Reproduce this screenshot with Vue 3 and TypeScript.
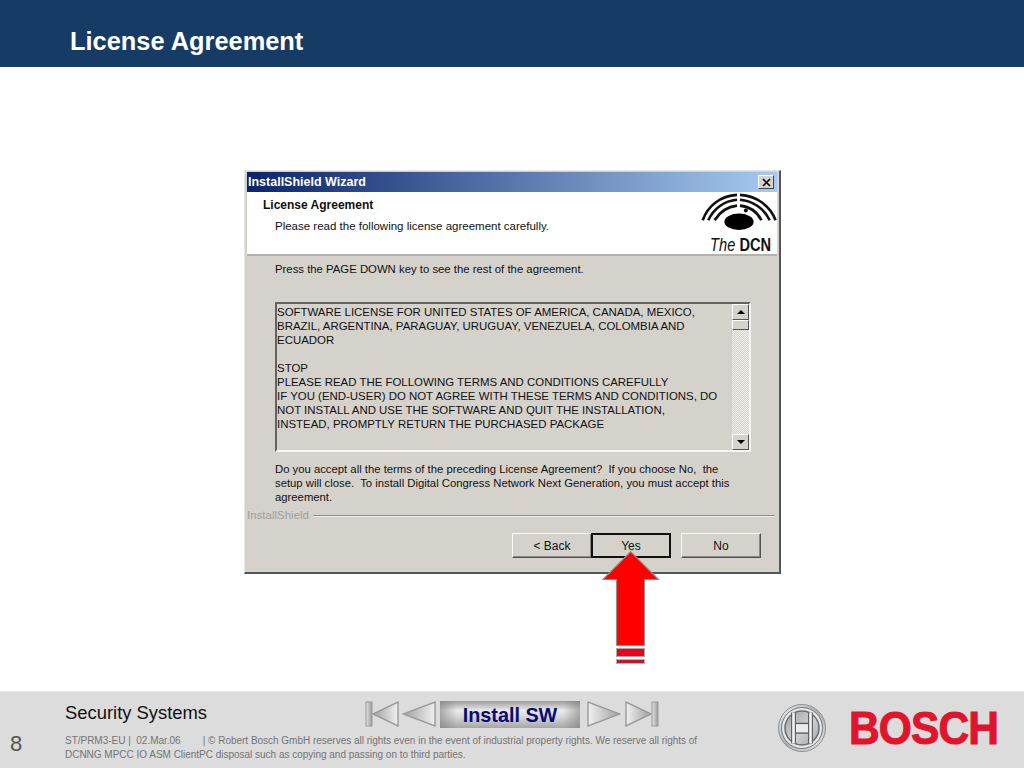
<template>
  <div class="slide">
    <header class="slide-header">
      <h1 class="slide-title">License Agreement</h1>
    </header>

    <main class="slide-body">
      <section class="wizard">
        <div class="titlebar">
          <span class="titlebar-text">InstallShield Wizard</span>
          <span class="close-btn">
            <svg width="13" height="11" viewBox="0 0 13 11">
              <path d="M3 2l7 7M10 2l-7 7" stroke="#000" stroke-width="1.6" fill="none" />
            </svg>
          </span>
        </div>

        <div class="banner">
          <div class="banner-text">
            <div class="banner-title">License Agreement</div>
            <div class="banner-sub">Please read the following license agreement carefully.</div>
          </div>
          <div class="dcn-logo">
            <svg width="76" height="40" viewBox="0 0 76 40">
              <g fill="none" stroke="#111" stroke-width="2.7">
                <path d="M.8 29C6 14 19 4 36 3" />
                <path d="M39 3C56 4 70 14 75.5 29" />
                <path d="M6.5 29C12 17 23 9 36 8" />
                <path d="M39 8C52 9 64 17 69.5 29" />
                <path d="M13 29C18 21 26 15 36 14" />
                <path d="M39 14C49 15 57 21 61 29" />
              </g>
              <ellipse cx="38" cy="30.5" rx="15" ry="8.5" fill="#000" />
              <circle cx="45" cy="19" r="2" fill="#000" />
            </svg>
            <div class="dcn-name"><span class="dcn-the">The</span> <b>DCN</b></div>
          </div>
        </div>

        <div class="wizard-content">
          <p class="press-line">Press the PAGE DOWN key to see the rest of the agreement.</p>

          <div class="license-box">
            <div class="license-text">{{ licenseText }}</div>
            <div class="scrollbar">
              <span class="scroll-btn"><i class="tri-up"></i></span>
              <span class="scroll-thumb"></span>
              <span class="scroll-track"></span>
              <span class="scroll-btn"><i class="tri-down"></i></span>
            </div>
          </div>

          <p class="question">{{ questionText }}</p>
        </div>

        <div class="brand-line">
          <span class="brand-name">InstallShield</span>
          <span class="brand-rule"></span>
        </div>

        <div class="buttons">
          <span class="btn">&lt; Back</span>
          <span class="btn btn-default">Yes</span>
          <span class="btn btn-no">No</span>
        </div>
      </section>

      <svg class="arrow" width="58" height="114" viewBox="0 0 58 114">
        <path
          d="M28.7.6 56.5 28.5H42.5V94.5H14.5V28.5H.8Z"
          fill="#fe0000"
          stroke="#8f8f8f"
          stroke-width="1.2"
        />
        <rect x="14.5" y="97.5" width="28" height="8" fill="#f0001c" stroke="#a8a8a8" />
        <rect x="14.5" y="108.5" width="28" height="4" fill="#bb1a2c" stroke="#b0b0b0" />
      </svg>
    </main>

    <footer class="slide-footer">
      <div class="page-num">8</div>

      <div class="footer-main">
        <div class="footer-top">
          <div class="division">Security Systems</div>
          <nav class="nav">
            <svg width="34" height="26" viewBox="0 0 34 26">
              <rect x="1" y="1" width="6" height="24" fill="url(#navV)" stroke="#9a9a9a" />
              <path d="M33 1V25L8 13Z" fill="url(#navL)" stroke="#9a9a9a" stroke-width="1.4" />
            </svg>
            <svg width="34" height="26" viewBox="0 0 34 26">
              <path d="M33 1V25L1 13Z" fill="url(#navL)" stroke="#9a9a9a" stroke-width="1.4" />
            </svg>
            <div class="nav-label">Install SW</div>
            <svg width="34" height="26" viewBox="0 0 34 26">
              <path d="M1 1V25L33 13Z" fill="url(#navR)" stroke="#9a9a9a" stroke-width="1.4" />
            </svg>
            <svg class="nav-last" width="34" height="26" viewBox="0 0 34 26">
              <path d="M1 1V25L26 13Z" fill="url(#navR)" stroke="#9a9a9a" stroke-width="1.4" />
              <rect x="27" y="1" width="6" height="24" fill="url(#navV)" stroke="#9a9a9a" />
            </svg>
            <svg width="0" height="0" class="defs">
              <defs>
                <linearGradient id="navL" x1="0" x2="1" y1="0" y2="0">
                  <stop offset="0" stop-color="#a0a0a0" />
                  <stop offset="1" stop-color="#f0f0f0" />
                </linearGradient>
                <linearGradient id="navR" x1="0" x2="1" y1="0" y2="0">
                  <stop offset="0" stop-color="#f0f0f0" />
                  <stop offset="1" stop-color="#a0a0a0" />
                </linearGradient>
                <linearGradient id="navV" x1="0" x2="1" y1="0" y2="0">
                  <stop offset="0" stop-color="#e4e4e4" />
                  <stop offset="1" stop-color="#9a9a9a" />
                </linearGradient>
              </defs>
            </svg>
          </nav>
        </div>
        <div class="legal">
          <div>ST/PRM3-EU&nbsp;|&nbsp;&nbsp;02.Mar.06&nbsp;&nbsp;&nbsp;&nbsp;&nbsp;&nbsp;&nbsp;&nbsp;|&nbsp;© Robert Bosch GmbH reserves all rights even in the event of industrial property rights. We reserve all rights of</div>
          <div>DCNNG MPCC IO ASM ClientPC disposal such as copying and passing on to third parties.</div>
        </div>
      </div>

      <div class="brand">
        <svg class="armature" width="50" height="50" viewBox="0 0 50 50">
          <defs>
            <linearGradient id="ringFill" x1="0" y1="0" x2="1" y2="1">
              <stop offset="0" stop-color="#f2f2f2" />
              <stop offset=".5" stop-color="#a9adb0" />
              <stop offset="1" stop-color="#ececec" />
            </linearGradient>
            <linearGradient id="faceFill" x1="0" y1="0" x2="1" y2="1">
              <stop offset="0" stop-color="#9ea2a6" />
              <stop offset=".55" stop-color="#cdd0d2" />
              <stop offset="1" stop-color="#a3a7ab" />
            </linearGradient>
          </defs>
          <circle cx="25" cy="25" r="23.5" fill="url(#ringFill)" stroke="#8b8f92" />
          <circle cx="25" cy="25" r="20.5" fill="#e6e7e8" stroke="#75797c" />
          <circle cx="25" cy="25" r="17" fill="url(#faceFill)" stroke="#6b6f72" stroke-width="1.5" />
          <path d="M18 20.5H32M18 30H32" stroke="#55595c" stroke-width="1.4" />
          <rect x="18" y="21.2" width="14" height="8.1" fill="#e9ebec" />
          <path d="M16.5 9.5V40.5M33.5 9.5V40.5" fill="none" stroke="#5f6366" stroke-width="5" />
          <path d="M16.5 9.5V40.5M33.5 9.5V40.5" fill="none" stroke="#f1f3f4" stroke-width="2.6" />
        </svg>
        <div class="wordmark">BOSCH</div>
      </div>
    </footer>
  </div>
</template>

<script setup lang="ts">
const licenseText = [
  'SOFTWARE LICENSE FOR UNITED STATES OF AMERICA, CANADA, MEXICO,',
  'BRAZIL, ARGENTINA, PARAGUAY, URUGUAY, VENEZUELA, COLOMBIA AND',
  'ECUADOR',
  '',
  'STOP',
  'PLEASE READ THE FOLLOWING TERMS AND CONDITIONS CAREFULLY',
  'IF YOU (END-USER) DO NOT AGREE WITH THESE TERMS AND CONDITIONS, DO',
  'NOT INSTALL AND USE THE SOFTWARE AND QUIT THE INSTALLATION,',
  'INSTEAD, PROMPTLY RETURN THE PURCHASED PACKAGE',
].join('\n')

const questionText = [
  'Do you accept all the terms of the preceding License Agreement?  If you choose No,  the',
  'setup will close.  To install Digital Congress Network Next Generation, you must accept this',
  'agreement.',
].join('\n')
</script>

<style scoped>
.slide {
  width: 1024px;
  height: 768px;
  display: flex;
  flex-direction: column;
  position: relative;
  overflow: hidden;
  background: #fff;
  font-family: "Liberation Sans", Arial, sans-serif;
}

/* Header */
.slide-header {
  height: 67px;
  flex: none;
  padding: 26px 0 0 70px;
  box-sizing: border-box;
  background: #163b65;
}

.slide-title {
  margin: 0;
  font-size: 25.4px;
  line-height: 30px;
  font-weight: 700;
  color: #fff;
}

/* Body */
.slide-body {
  flex: 1;
  position: relative;
  padding: 103px 0 0 244px;
}

.wizard {
  width: 537px;
  height: 404px;
  box-sizing: border-box;
  display: flex;
  flex-direction: column;
  padding: 1px 2px 0 2px;
  background: #d5d2cc;
  border-right: 2px solid #55565a;
  border-bottom: 2px solid #55565a;
  border-top: 1px solid #e8e6e1;
  border-left: 1px solid #e8e6e1;
  font-size: 12px;
  color: #111;
}

.titlebar {
  height: 20px;
  flex: none;
  display: flex;
  align-items: center;
  justify-content: space-between;
  padding: 0 3px 0 1px;
  background: linear-gradient(to right, #0a246a, #a6caf0);
}

.titlebar-text {
  color: #fff;
  font-weight: 700;
  font-size: 12.5px;
}

.close-btn {
  width: 16px;
  height: 14px;
  display: flex;
  align-items: center;
  justify-content: center;
  box-sizing: border-box;
  background: #d5d2cc;
  border: 1px solid;
  border-color: #fff #444 #444 #fff;
}

.banner {
  height: 62px;
  flex: none;
  display: flex;
  justify-content: space-between;
  background: #fff;
  border-bottom: 2px solid #b4b2ac;
  box-sizing: content-box;
}

.banner-text {
  padding: 6px 0 0 16px;
}

.banner-title {
  font-weight: 700;
  font-size: 12px;
  line-height: 14px;
}

.banner-sub {
  margin: 7px 0 0 12px;
  line-height: 14px;
  font-size: 11.5px;
}

.dcn-logo {
  width: 77px;
  display: flex;
  flex-direction: column;
  align-items: center;
}

.dcn-name {
  margin-top: 5px;
  margin-left: 4px;
  line-height: 18px;
  font-size: 19px;
  white-space: nowrap;
  transform: scaleX(0.77);
  color: #111;
}

.dcn-the {
  font-style: italic;
}

.wizard-content {
  flex: none;
  padding: 6px 28px 0 28px;
}

.press-line {
  margin: 0 0 26px;
  line-height: 14px;
  font-size: 11.35px;
}

.license-box {
  height: 150px;
  width: 476px;
  display: flex;
  box-sizing: border-box;
  border: 2px solid;
  border-color: #66645f #f6f5f2 #f6f5f2 #66645f;
}

.license-text {
  flex: 1;
  min-width: 0;
  padding-top: 1px;
  line-height: 14px;
  font-size: 11.45px;
  white-space: pre;
}

.scrollbar {
  width: 17px;
  display: flex;
  flex-direction: column;
  flex: none;
}

.scroll-btn,
.scroll-thumb {
  display: flex;
  align-items: center;
  justify-content: center;
  box-sizing: border-box;
  flex: none;
  background: #d5d2cc;
  border: 1px solid;
  border-color: #fff #555 #555 #fff;
}

.scroll-btn {
  height: 16px;
}

.scroll-thumb {
  height: 10px;
}

.scroll-track {
  flex: 1;
  background: repeating-conic-gradient(#d5d2cc 0 25%, #f1efea 0 50%) 0 0 / 2px 2px;
}

.tri-up {
  border-left: 4px solid transparent;
  border-right: 4px solid transparent;
  border-bottom: 4px solid #000;
}

.tri-down {
  border-left: 4px solid transparent;
  border-right: 4px solid transparent;
  border-top: 4px solid #000;
}

.question {
  margin: 10px 0 0;
  line-height: 14px;
  font-size: 11.3px;
  white-space: pre;
}

.brand-line {
  margin-top: 4px;
  display: flex;
  align-items: center;
  gap: 4px;
  padding-right: 2px;
}

.brand-name {
  font-size: 11.5px;
  line-height: 14px;
  color: #a09e99;
}

.brand-rule {
  flex: 1;
  height: 1px;
  background: #8f8d88;
  box-shadow: 0 1px 0 #f0efeb;
}

.buttons {
  margin-top: 11px;
  display: flex;
  justify-content: flex-end;
  padding-right: 16px;
}

.btn {
  width: 80px;
  height: 25px;
  display: flex;
  align-items: center;
  justify-content: center;
  box-sizing: border-box;
  font-size: 12px;
  background: #d5d2cc;
  border: 1px solid;
  border-color: #fbfaf7 #55534f #55534f #fbfaf7;
  box-shadow: inset -1px -1px 0 #8a8882;
}

.btn-default {
  margin-left: -1px;
  border: 2px solid #111;
  box-shadow: none;
}

.btn-no {
  margin-left: 10px;
}

.arrow {
  position: absolute;
  left: 601.5px;
  top: 484px;
}

/* Footer */
.slide-footer {
  height: 77px;
  flex: none;
  display: flex;
  box-sizing: border-box;
  background: #dcdcdc;
  border-top: 1px solid #e8e8e8;
}

.page-num {
  width: 65px;
  flex: none;
  box-sizing: border-box;
  padding: 38px 0 0 10px;
  font-size: 22px;
  line-height: 28px;
  color: #555;
}

.footer-main {
  width: 640px;
  flex: none;
}

.footer-top {
  display: flex;
  height: 42px;
}

.division {
  width: 300px;
  padding-top: 11px;
  font-size: 18.4px;
  line-height: 20px;
  color: #111;
}

.nav {
  display: flex;
  align-items: flex-start;
  gap: 3px;
  padding-top: 9px;
}

.nav-last {
  margin-left: 1px;
}

.defs {
  position: absolute;
}

.nav-label {
  width: 140px;
  height: 27px;
  margin: 0 4px 0 1px;
  text-align: center;
  font-size: 19.8px;
  font-weight: 700;
  line-height: 28px;
  color: #0b0b73;
  background:
    linear-gradient(to right, rgba(120, 120, 120, 0.55), transparent 12%, transparent 88%, rgba(120, 120, 120, 0.55)),
    linear-gradient(to bottom, #9d9d9d, #eaeaea 35%, #d5d5d5 60%, #a6a6a6);
}

.legal {
  font-size: 10px;
  line-height: 14px;
  letter-spacing: -0.015px;
  color: #747474;
  white-space: nowrap;
}

.brand {
  display: flex;
  align-items: center;
  margin-left: 71px;
  padding-bottom: 5px;
}

.armature {
  margin-left: 1px;
  flex: none;
}

.wordmark {
  margin-left: 22px;
  width: 146px;
  font-size: 46px;
  font-weight: 700;
  line-height: 46px;
  color: #e0142d;
  letter-spacing: -1px;
  transform: scaleX(0.925);
  transform-origin: left center;
  -webkit-text-stroke: 1px #e0142d;
}
</style>
